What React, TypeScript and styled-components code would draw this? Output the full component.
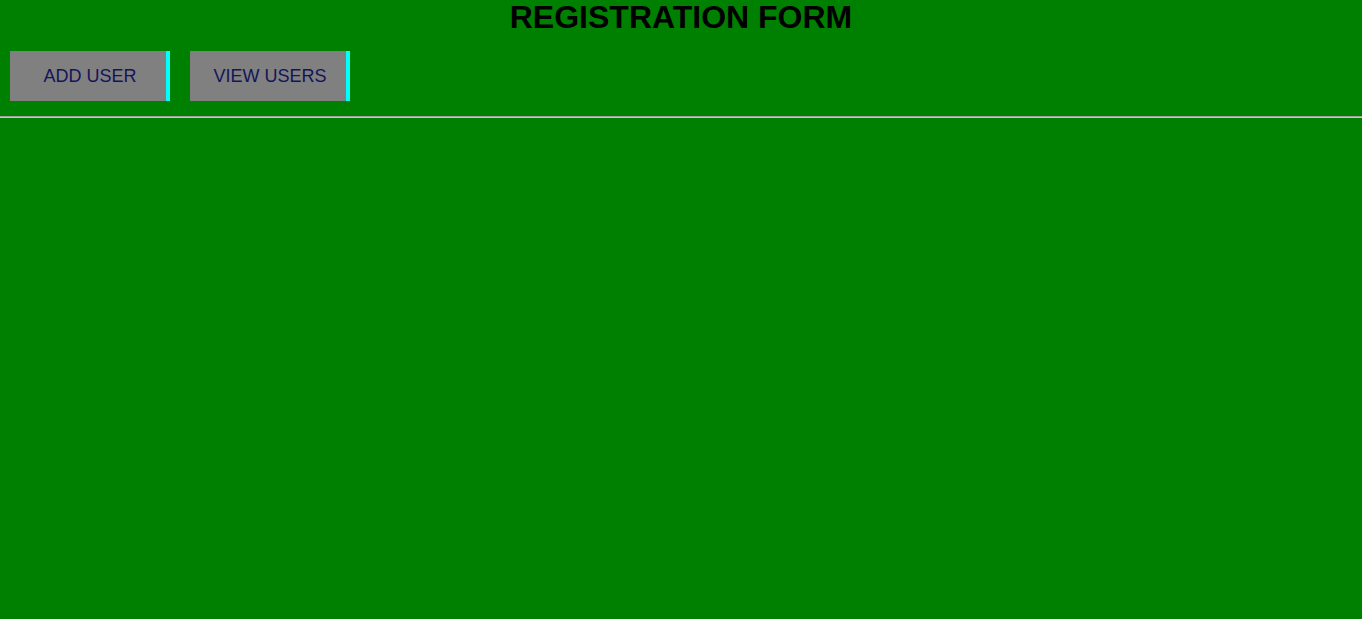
import React from "react";
import styled, { createGlobalStyle } from "styled-components";

const Global = createGlobalStyle`
  html, body { margin: 0; padding: 0; background: #008000; }
  body { font-family: "Liberation Sans", Arial, sans-serif; min-height: 619px; }
`;

const Title = styled.h1`
  margin: 0;
  font-size: 32px;
  font-weight: bold;
  text-align: center;
  color: #000;
  line-height: 35px;
`;

const Nav = styled.nav`
  display: flex;
  gap: 20px;
  padding: 16px 10px 15px;
`;

const NavButton = styled.button`
  width: 160px;
  height: 50px;
  background: #808080;
  border: none;
  border-right: 4px solid #00ffff;
  color: #14145a;
  font-family: "Liberation Sans", Arial, sans-serif;
  font-size: 18px;
  padding: 0 0 0 4px;
  cursor: pointer;
`;

const Divider = styled.hr`
  margin: 0;
  border: none;
  border-top: 1px solid #a0a0a0;
  border-bottom: 1px solid #c8c8c8;
`;

export default function App() {
  return (
    <>
      <Global />
      <Title>REGISTRATION FORM</Title>
      <Nav>
        <NavButton>ADD USER</NavButton>
        <NavButton>VIEW USERS</NavButton>
      </Nav>
      <Divider />
    </>
  );
}
